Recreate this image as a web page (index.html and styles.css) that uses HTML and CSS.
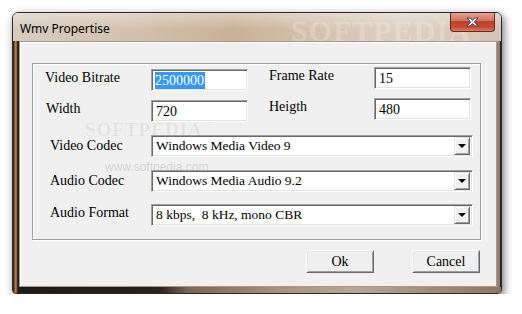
FILE: index.html
```html
<!DOCTYPE html>
<html>
<head>
    <title>Wmv Propertise</title>
    <link rel="stylesheet" href="styles.css">
</head>
<body>
    <div class="window">
        <div class="titlebar">
            <span class="title">Wmv Propertise</span>
            <span class="title-mark">SOFTPEDIA</span>
            <div class="close-btn">
                <svg width="13" height="10" viewBox="0 0 13 10">
                    <path d="M1 1h3.2l2.3 2.4 2.3-2.4H12L8.4 5 12 9H8.8L6.5 6.6 4.2 9H1l3.6-4z" fill="#fff" stroke="#3a3f4c" stroke-width="1" stroke-linejoin="round"/>
                </svg>
            </div>
        </div>
        <div class="frame">
            <div class="client">
                <div class="watermark">SOFTPEDIA<span class="tm">™</span><span class="url">www.softpedia.com</span></div>

                <div class="group">
                    <div class="grid-top">
                        <label>Video Bitrate</label>
                        <div class="field"><span class="sel">2500000</span></div>
                        <label class="right">Frame Rate</label>
                        <div class="field right">15</div>

                        <label class="lbl-width">Width</label>
                        <div class="field">720</div>
                        <label class="right">Heigth</label>
                        <div class="field right">480</div>
                    </div>

                    <div class="grid-codec">
                        <label>Video Codec</label>
                        <div class="combo">
                            <span>Windows Media Video 9</span>
                            <div class="arrow"></div>
                        </div>

                        <label>Audio Codec</label>
                        <div class="combo">
                            <span>Windows Media Audio 9.2</span>
                            <div class="arrow"></div>
                        </div>

                        <label class="lbl-format">Audio Format</label>
                        <div class="combo">
                            <span>8 kbps,&nbsp; 8 kHz, mono CBR</span>
                            <div class="arrow"></div>
                        </div>
                    </div>
                </div>

                <div class="buttons">
                    <button>Ok</button>
                    <button>Cancel</button>
                </div>
            </div>
        </div>
    </div>
</body>
</html>
```

FILE: styles.css
```css
html, body {
    margin: 0;
    background: #fff;
}
body {
    padding: 12px 0 0 12px;
    font-family: "Liberation Serif", "Times New Roman", serif;
    font-size: 14px;
    color: #000;
}
.window {
    width: 490px;
    height: 282px;
    box-sizing: border-box;
    border: 1px solid #2e2a28;
    border-radius: 6px 6px 4px 4px;
    box-shadow: 2px 3px 9px rgba(0,0,0,0.55);
    display: flex;
    flex-direction: column;
    overflow: hidden;
    position: relative;
}
.titlebar {
    height: 28px;
    display: flex;
    align-items: flex-start;
    position: relative;
    background:
        linear-gradient(to bottom, rgba(255,255,255,0.35), rgba(255,255,255,0) 60%),
        linear-gradient(to right, #d7ccc0 0%, #d2c1ad 25%, #c9b196 45%, #d4c2ad 62%, #ddd0c2 80%, #d3c4b4 100%);
}
.title {
    font-family: "Noto Sans", "Open Sans", sans-serif;
    font-size: 12px;
    padding: 7px 0 0 7px;
    color: #000;
}
.title-mark {
    position: absolute;
    left: 278px;
    top: 1px;
    font-family: "Liberation Serif", serif;
    font-weight: bold;
    font-size: 30px;
    letter-spacing: 1px;
    color: rgba(255,255,255,0.22);
}
.close-btn {
    margin-left: auto;
    margin-right: 6px;
    margin-top: -1px;
    width: 45px;
    height: 20px;
    box-sizing: border-box;
    border: 1px solid #5e2a22;
    border-top: none;
    border-radius: 0 0 4px 4px;
    background: linear-gradient(to bottom, #e7a898 0%, #d4735f 45%, #c0412b 50%, #c84a33 80%, #dd7d62 100%);
    display: flex;
    align-items: center;
    justify-content: center;
    position: relative;
    z-index: 1;
}
.frame {
    flex: 1;
    display: flex;
    padding: 0 5px 6px 6px;
    background:
        linear-gradient(to right, #1f1a17 0, #5d3b24 1px, #c98f5d 3px, #5d3b24 4px, #1f1a17 5px) left top / 6px 100% no-repeat,
        linear-gradient(to right, #1f1a17 0, #2b201a 30%, #7d6655 36%, #a8937f 55%, #b9a696 70%, #8c7665 100%) left bottom / 100% 6px no-repeat,
        linear-gradient(to right, #a38a78, #8f7767 80%, #2a2421 80%) right top / 5px 100% no-repeat,
        #9c8575;
}
.client {
    flex: 1;
    position: relative;
    background: #f0f0f0;
    border: 1px solid #a19a94;
    box-shadow: inset 1px 1px 0 #fff;
    padding: 21px 15px 0 12px;
}
.watermark {
    position: absolute;
    left: 65px;
    top: 78px;
    font-weight: bold;
    font-size: 19px;
    letter-spacing: 1px;
    color: rgba(0,0,0,0.06);
    line-height: 1;
}
.watermark .tm {
    font-size: 9px;
    vertical-align: top;
}
.watermark .url {
    display: block;
    font-family: "Liberation Sans", sans-serif;
    font-weight: normal;
    font-size: 12px;
    letter-spacing: 0;
    margin: 22px 0 0 20px;
    color: rgba(0,0,0,0.15);
}
.group {
    position: relative;
    border: 1px solid #a0a0a0;
    box-shadow: 1px 1px 0 #fff, inset 1px 1px 0 #fff;
    padding: 5px 7px 12px 12px;
}
.grid-top {
    display: grid;
    grid-template-columns: 106px 118px 105px 97px;
    grid-template-rows: 22px 22px;
    row-gap: 9px;
    align-items: center;
}
.grid-top .field {
    width: 97px;
}
.grid-top .right {
    margin-top: -4px;
}
.grid-top label {
    padding-bottom: 4px;
}
.lbl-width {
    padding-left: 1px;
}
.field {
    height: 22px;
    box-sizing: border-box;
    background: #fff;
    border: 1px solid;
    border-color: #a0a0a0 #fff #fff #a0a0a0;
    box-shadow: inset 1px 1px 0 #696969, inset -1px -1px 0 #e3e3e3;
    padding: 2px 0 0 4px;
    line-height: 17px;
    font-size: 14px;
}
.field .sel {
    background: #3399ff;
    color: #fff;
    display: inline-block;
    padding: 0 1px 0 0;
    margin-left: -1px;
}
.grid-codec {
    display: grid;
    grid-template-columns: 101px 322px;
    grid-template-rows: 22px 22px 22px;
    row-gap: 13px;
    margin-top: 13px;
    padding-left: 5px;
    align-items: center;
}
.grid-codec .combo:nth-of-type(3) {
    margin-top: -2px;
}
.lbl-format {
    margin-top: -6px;
}
.combo {
    height: 22px;
    box-sizing: border-box;
    background: #fff;
    border: 1px solid;
    border-color: #a0a0a0 #fff #fff #a0a0a0;
    box-shadow: inset 1px 1px 0 #696969, inset -1px -1px 0 #e3e3e3;
    display: flex;
    align-items: center;
    padding: 2px 2px 2px 4px;
    font-size: 13.5px;
}
.combo span {
    flex: 1;
}
.arrow {
    width: 16px;
    height: 18px;
    box-sizing: border-box;
    background: #f0f0f0;
    border: 1px solid;
    border-color: #e3e3e3 #696969 #696969 #e3e3e3;
    box-shadow: inset 1px 1px 0 #fff, inset -1px -1px 0 #a0a0a0;
    display: flex;
    align-items: center;
    justify-content: center;
}
.arrow::before {
    content: "";
    border-left: 4px solid transparent;
    border-right: 4px solid transparent;
    border-top: 4px solid #000;
}
.buttons {
    display: flex;
    justify-content: flex-end;
    gap: 38px;
    margin-top: 10px;
    margin-right: 1px;
}
button {
    width: 68px;
    height: 23px;
    box-sizing: border-box;
    background: #f0f0f0;
    border: 1px solid;
    border-color: #fff #696969 #696969 #fff;
    box-shadow: inset 1px 1px 0 #e3e3e3, inset -1px -1px 0 #a0a0a0;
    font-family: "Liberation Serif", serif;
    font-size: 14px;
    color: #000;
    padding: 0;
}
```
